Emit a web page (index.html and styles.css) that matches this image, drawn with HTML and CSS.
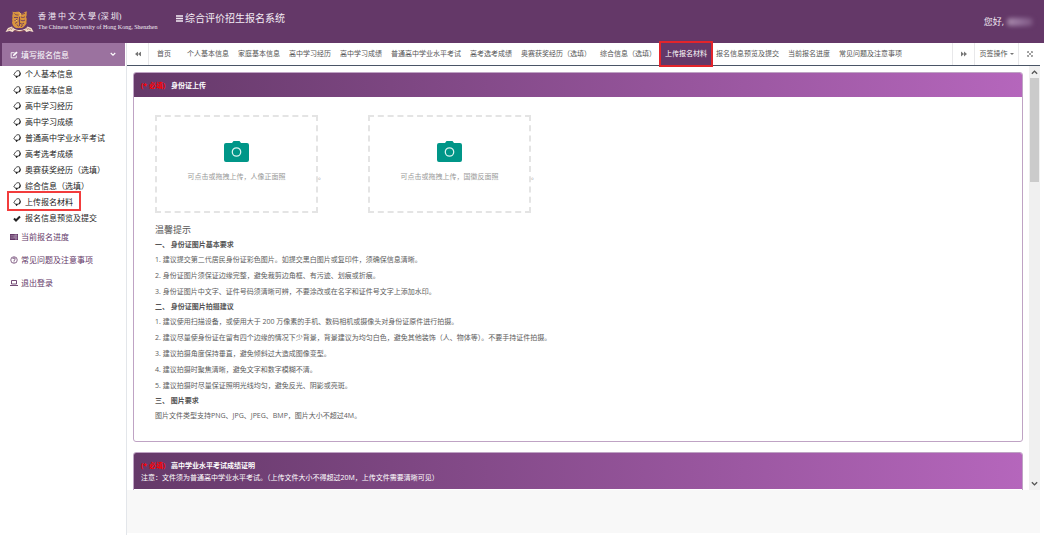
FILE: index.html
```html
<!DOCTYPE html>
<html lang="zh-CN">
<head>
<meta charset="utf-8">
<meta name="viewport" content="width=device-width, initial-scale=1">
<title>综合评价招生报名系统</title>
<link rel="stylesheet" href="styles.css">
</head>
<body>
<svg class="symbols" aria-hidden="true">
  <symbol id="hand" viewBox="0 0 16 18">
    <path d="M5 4 8 1.500h4.500L15 7l-2 5H9.500L7 15.500 5.500 12 1.500 9.500z" fill="none" stroke="currentColor" stroke-width="1.500" stroke-linejoin="round"/>
    <path d="m13 3 2.500 4.500-2 4.500H11l2-4zM5 11.500h4.500L7.500 16z" fill="currentColor"/>
  </symbol>
  <symbol id="left2" viewBox="0 0 12 10"><path d="M6 0v10L0 5zM12 0v10L6 5z" fill="currentColor"/></symbol>
  <symbol id="camera" viewBox="0 0 25 21">
    <path d="M2 2h6l1.500-2h6L17 2h6a2 2 0 0 1 2 2v15a2 2 0 0 1-2 2H2a2 2 0 0 1-2-2V4a2 2 0 0 1 2-2z" fill="currentColor"/>
    <circle cx="12.500" cy="11" r="4.200" fill="none" stroke="#d9f3ef" stroke-width="1.300"/>
  </symbol>
</svg>

<header class="header">
  <svg class="emblem" viewBox="0 0 58 46" aria-hidden="true">
    <path d="M15 3c5 3 7-1 12 1 4 1 4 5 8 3 3-2 6-5 9-4-2 4 1 7-2 11 3 4 0 8 1 13-3 4-5 7-9 9H22c-5-2-7-6-8-11 2-3-1-6 1-9-2-5 2-8 0-13z" fill="#d9943f"/>
    <path d="M19 7c2 3 5 3 8 3M18 15h8m-7 6 6-3m-5 9 7-5m3-14c5 2 8-2 10-1m-8 7c4 2 6 1 8-1m-9 7c4 2 6 2 9 0m-10 6c3 3 5 3 8 0M29 12v20m-5-3 3 4m8-3-3 4" fill="none" stroke="#6b3a5d" stroke-width="1.800"/>
    <path d="m27 4 5 4-3 5m-8 6 4 4" fill="none" stroke="#f2bd60" stroke-width="2"/>
    <path d="M1 44 6 36l8-3 4 4c8 4 15 4 23 0l4-4 8 3 4 8-8-2-6 2-5-4c-6 3-12 3-18 0l-5 4-6-2z" fill="#f4dfcb"/>
    <path d="m6 40 6-3m5 3c7 4 17 4 24 0m5-3 6 3M15 34l-2 6m30-6 2 6" fill="none" stroke="#a45f50" stroke-width="1.300"/>
  </svg>
  <div class="brand">
    <span class="brand-zh">香 港 中 文 大 學 (深 圳)</span>
    <span class="brand-en">The Chinese University of Hong Kong, Shenzhen</span>
  </div>
  <button class="menu-toggle" aria-label="菜单"><svg viewBox="0 0 7 7"><path d="M0 1h7M0 3.500h7M0 6h7" stroke="currentColor" stroke-width="1.300"/></svg></button>
  <h1 class="system-title">综合评价招生报名系统</h1>
  <div class="greeting">您好, <span class="masked-name"></span></div>
</header>

<div class="layout">
  <nav class="sidebar">
    <a class="side-main side-open" href="#">
      <svg class="side-icon" viewBox="0 0 14 14"><path d="M11 8v4H2V3h6" fill="none" stroke="currentColor" stroke-width="1.500"/><path d="m5 9 .5-2.500L11 1l2.500 2L7.500 8.500z" fill="currentColor"/></svg>
      <span>填写报名信息</span>
      <svg class="chevron" viewBox="0 0 8 6"><path d="m1 1 3 3 3-3" fill="none" stroke="currentColor" stroke-width="1.500"/></svg>
    </a>
    <ul class="side-sub">
      <li><a href="#"><svg><use href="#hand"/></svg>个人基本信息</a></li>
      <li><a href="#"><svg><use href="#hand"/></svg>家庭基本信息</a></li>
      <li><a href="#"><svg><use href="#hand"/></svg>高中学习经历</a></li>
      <li><a href="#"><svg><use href="#hand"/></svg>高中学习成绩</a></li>
      <li><a href="#"><svg><use href="#hand"/></svg>普通高中学业水平考试</a></li>
      <li><a href="#"><svg><use href="#hand"/></svg>高考选考成绩</a></li>
      <li><a href="#"><svg><use href="#hand"/></svg>奥赛获奖经历（选填）</a></li>
      <li><a href="#"><svg><use href="#hand"/></svg>综合信息（选填）</a></li>
      <li><a class="marked" href="#"><svg><use href="#hand"/></svg>上传报名材料</a></li>
      <li><a href="#"><svg viewBox="0 0 16 16"><path d="m2 8 4 4 8-8" fill="none" stroke="currentColor" stroke-width="4"/></svg>报名信息预览及提交</a></li>
    </ul>
    <a class="side-main" href="#">
      <svg class="side-icon" viewBox="0 0 16 14"><path d="M0 1h16v12H0z" fill="currentColor"/><path d="M1 4.800h14M1 9h14M9 3h5M7 7h7M10 11h4" stroke="#e2d5e5" stroke-width="1"/></svg>
      <span>当前报名进度</span>
    </a>
    <a class="side-main" href="#">
      <svg class="side-icon" viewBox="0 0 16 16"><circle cx="8" cy="8" r="6.500" fill="none" stroke="currentColor" stroke-width="1.500"/><path d="M5.500 6c0-3 5-3 5 0 0 2-2.500 1.500-2.500 4m0 1v2" fill="none" stroke="currentColor" stroke-width="1.800"/></svg>
      <span>常见问题及注意事项</span>
    </a>
    <a class="side-main" href="#">
      <svg class="side-icon" viewBox="0 0 16 14"><path d="M3 2h10v7H3zM0 12h16" fill="none" stroke="currentColor" stroke-width="1.800"/></svg>
      <span>退出登录</span>
    </a>
  </nav>

  <main class="main">
    <div class="tabbar">
      <button class="tab-tool tab-prev" aria-label="向左"><svg viewBox="0 0 12 10"><use href="#left2"/></svg></button>
      <div class="tabs">
        <a class="tab tab-home" href="#">首页</a>
        <a class="tab" href="#">个人基本信息</a>
        <a class="tab" href="#">家庭基本信息</a>
        <a class="tab" href="#">高中学习经历</a>
        <a class="tab" href="#">高中学习成绩</a>
        <a class="tab" href="#">普通高中学业水平考试</a>
        <a class="tab" href="#">高考选考成绩</a>
        <a class="tab" href="#">奥赛获奖经历（选填）</a>
        <a class="tab" href="#">综合信息（选填）</a>
        <a class="tab tab-active" href="#">上传报名材料</a>
        <a class="tab" href="#">报名信息预览及提交</a>
        <a class="tab" href="#">当前报名进度</a>
        <a class="tab" href="#">常见问题及注意事项</a>
      </div>
      <button class="tab-tool" aria-label="向右"><svg viewBox="0 0 12 10"><path d="M0 0v10l6-5zM6 0v10l6-5z" fill="currentColor"/></svg></button>
      <button class="tab-tool tab-ops">页签操作<span class="caret"></span></button>
      <button class="tab-tool" aria-label="全屏"><svg viewBox="0 0 12 12"><path d="m2 2 8 8m0-8-8 8M1 4V1h3m4 0h3v3m0 4v3H8m-4 0H1V8" fill="none" stroke="currentColor" stroke-width="1.400"/></svg></button>
    </div>

    <div class="frame">
      <div class="content">
        <section class="card">
          <div class="card-head">
            <h2><span class="required">(* 必填)</span>身份证上传</h2>
          </div>
          <div class="card-body">
            <div class="uploads">
              <div class="upload">
                <button class="dropzone"><svg viewBox="0 0 25 21"><use href="#camera"/></svg>可点击或拖拽上传，人像正面照</button><span>。</span>
              </div>
              <div class="upload">
                <button class="dropzone"><svg viewBox="0 0 25 21"><use href="#camera"/></svg>可点击或拖拽上传，国徽反面照</button><span>。</span>
              </div>
            </div>
            <h3>温馨提示</h3>
            <h4>一、 身份证图片基本要求</h4>
            <div class="tips">
              <p>1. 建议提交第二代居民身份证彩色图片。如提交黑白图片或复印件，须确保信息清晰。</p>
              <p>2. 身份证图片须保证边缘完整，避免裁剪边角框、有污迹、划痕或折痕。</p>
              <p>3. 身份证图片中文字、证件号码须清晰可辨，不要涂改或在名字和证件号文字上添加水印。</p>
            </div>
            <h4>二、 身份证图片拍摄建议</h4>
            <div class="tips">
              <p>1. 建议使用扫描设备，或使用大于 200 万像素的手机、数码相机或摄像头对身份证原件进行拍摄。</p>
              <p>2. 建议尽量使身份证在留有四个边缘的情况下少背景，背景建议为均匀白色，避免其他装饰（人、物体等）。不要手持证件拍摄。</p>
              <p>3. 建议拍摄角度保持垂直，避免倾斜过大造成图像变型。</p>
              <p>4. 建议拍摄时聚焦清晰，避免文字和数字模糊不清。</p>
              <p>5. 建议拍摄时尽量保证照明光线均匀，避免反光、阴影或亮斑。</p>
            </div>
            <h4>三、 图片要求</h4>
            <div class="tips">
              <p>图片文件类型支持PNG、JPG、JPEG、BMP，图片大小不超过4M。</p>
            </div>
          </div>
        </section>

        <section class="card">
          <div class="card-head">
            <h2><span class="required">(* 必填)</span>高中学业水平考试成绩证明</h2>
            <p>注意：文件须为普通高中学业水平考试。（上传文件大小不得超过20M，上传文件需要清晰可见）</p>
          </div>
          <div class="card-body"></div>
        </section>
      </div>
      <div class="scrollbar" aria-hidden="true">
        <svg viewBox="0 0 8 6"><path d="m1 5 3-3 3 3" fill="none" stroke="currentColor" stroke-width="1.600"/></svg>
        <div class="track"><div class="thumb"></div></div>
        <svg viewBox="0 0 8 6"><path d="m1 1 3 3 3-3" fill="none" stroke="currentColor" stroke-width="1.600"/></svg>
      </div>
    </div>
    <footer class="footer"></footer>
  </main>
</div>
</body>
</html>
```
FILE: styles.css
```css
* { box-sizing: border-box; }

body {
  margin: 0;
  height: 100vh;
  display: flex;
  flex-direction: column;
  overflow: hidden;
  background: #fff;
  color: #555;
  font-family: "Open Sans", "Noto Sans CJK SC", sans-serif;
  font-size: 7px;
}

h1, h2, h3, h4, p, ul { margin: 0; padding: 0; }
ul { list-style: none; }
a { color: inherit; text-decoration: none; }
button {
  margin: 0;
  padding: 0;
  border: 0;
  background: none;
  color: inherit;
  font: inherit;
  cursor: pointer;
}
svg { display: block; flex: none; }
.symbols { position: absolute; width: 0; height: 0; }

/* Header */
.header {
  flex: none;
  display: flex;
  align-items: center;
  height: 43px;
  padding: 0 11px 0 5px;
  background: #643868;
  color: #f3ecf4;
}
.emblem { width: 29px; height: 23px; margin-right: 4px; }
.brand {
  display: flex;
  flex-direction: column;
  width: 138px;
  white-space: nowrap;
  line-height: 10px;
}
.brand-zh { font-family: "Liberation Serif", "Noto Sans CJK TC", serif; font-size: 8px; }
.brand-en { font-family: "Liberation Serif", serif; font-size: 6px; }
.menu-toggle { padding-bottom: 7px; }
.menu-toggle svg { width: 7px; height: 7px; }
.system-title {
  margin-left: 2px;
  padding-bottom: 8px;
  font-size: 10px;
  font-weight: 400;
  line-height: 14px;
}
.greeting {
  display: flex;
  align-items: center;
  gap: 3px;
  margin-left: auto;
  font-size: 9px;
}
.masked-name {
  width: 26px;
  height: 8px;
  border-radius: 4px;
  background: linear-gradient(90deg, #a88bab, #93709a 50%, #7b5480);
  filter: blur(2px);
}

.layout { flex: 1; display: flex; min-height: 0; }

/* Sidebar */
.sidebar {
  flex: none;
  width: 127px;
  padding-right: 1px;
  border-right: 1px solid #e3e6ea;
}
.side-main {
  display: flex;
  align-items: center;
  height: 23px;
  padding: 0 9px 0 10px;
  color: #643868;
  font-size: 8px;
}
.side-icon { width: 8px; height: 8px; margin-right: 3px; }
.side-open {
  padding-left: 8px;
  border-left: 2px solid #643868;
  background: #9b729f;
  color: #fff;
}
.chevron { width: 6px; height: 5px; margin-left: auto; }
.side-sub { margin-bottom: -1px; color: #222; font-size: 8px; line-height: 16px; }
.side-sub a { display: flex; align-items: center; padding-left: 13px; }
.side-sub svg { width: 8px; height: 9px; margin-right: 4px; }
.side-sub .marked { position: relative; }
.side-sub .marked::after {
  content: "";
  position: absolute;
  inset: -3px 44px -1px 7px;
  border: 2px solid #f23c3c;
}

/* Tab bar */
.main { flex: 1; display: flex; flex-direction: column; min-width: 0; padding: 0 4px 2px 0; }
.tabbar {
  flex: none;
  display: flex;
  height: 23px;
  border-bottom: 1px solid #4a5566;
  line-height: 22px;
}
.tab-tool {
  display: flex;
  align-items: center;
  justify-content: center;
  min-width: 22px;
  border-left: 1px solid #e8e8ea;
  color: #777;
}
.tab-tool svg { width: 6px; height: 6px; }
.tab-prev { border-left: 0; border-right: 1px solid #e8e8ea; }
.tab-ops { width: 44px; gap: 2px; color: #555; }
.caret { border: 2px solid transparent; border-top-color: #777; border-bottom: 0; }
.tabs { flex: 1; display: flex; gap: 1px; min-width: 0; padding-left: 4px; white-space: nowrap; }
.tab { padding: 0 4px; }
.tab-home { margin-right: 7px; }
.tab-active {
  position: relative;
  background: #643868;
  color: #fff;
  box-shadow: 0 0 0 2px #e3242b;
}

/* Scrolling frame */
.frame { flex: 1; display: flex; min-height: 0; }
.content {
  flex: 1;
  display: flex;
  flex-direction: column;
  gap: 10px;
  min-width: 0;
  padding: 6px 6px 0;
  overflow: hidden;
}
.card {
  flex: none;
  border: 1px solid #bfa3c4;
  border-radius: 3px;
  overflow: hidden;
}
.card-head {
  padding: 7px 7px 5px;
  background: linear-gradient(90deg, #653969, #b566bc);
  color: #fff;
  line-height: 12px;
}
.card-head h2 { display: flex; gap: 5px; font-size: 7px; }
.required { width: 25px; color: #ff0000; white-space: nowrap; }
.card-body { padding: 18px 21px; }
.uploads { display: flex; gap: 44px; margin-bottom: 10px; color: #999; }
.upload { display: flex; align-items: center; width: 169px; }
.upload span { padding-top: 24px; width: 6px; }
.dropzone {
  flex: 1;
  display: flex;
  flex-direction: column;
  align-items: center;
  gap: 9px;
  height: 98px;
  padding-top: 24px;
  border: 2px dashed #e4e4e4;
}
.dropzone svg { width: 25px; height: 21px; color: #009688; }
h3 { font-size: 9px; font-weight: 400; line-height: 14px; }
h4 { font-size: 7px; font-weight: 600; line-height: 15px; }
.tips { display: flex; flex-direction: column; gap: 1px; color: #5c5c5c; line-height: 15px; }

/* Scrollbar */
.scrollbar {
  display: flex;
  flex-direction: column;
  align-items: center;
  width: 11px;
  padding: 3px 0;
  background: #f0f0f0;
  color: #555;
}
.scrollbar svg { width: 7px; height: 6px; }
.track { flex: 1; width: 9px; padding: 3px 0; }
.thumb { height: 26%; background: #cbcbcb; }

.footer { flex: none; height: 43px; background: #f8f8f8; }
```
